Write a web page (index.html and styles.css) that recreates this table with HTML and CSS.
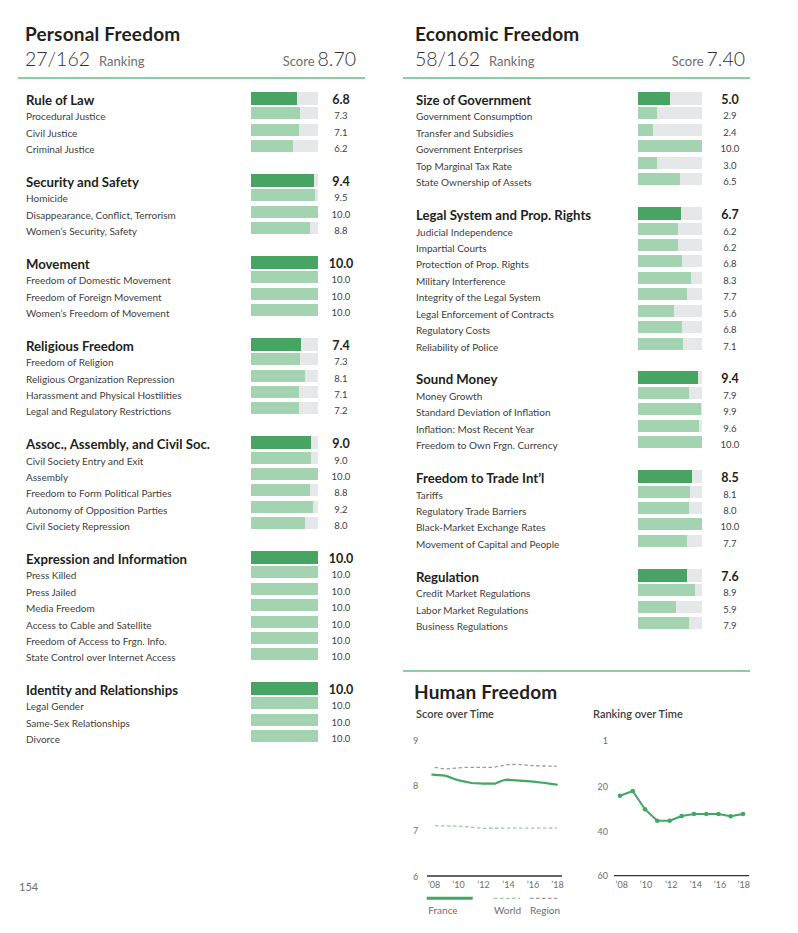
FILE: index.html
```html
<!DOCTYPE html>
<html lang="en">
<head>
<meta charset="utf-8">
<title>Freedom Index</title>
<link rel="stylesheet" href="styles.css">
</head>
<body>
<div class="page">
  <section class="col col-personal">
    <header class="col-head">
      <h1 class="col-title">Personal Freedom</h1>
      <div class="rank-line">
        <div class="rank"><span class="rank-num">27/162</span><span class="rank-lbl">Ranking</span></div>
        <div class="score"><span class="score-lbl">Score</span><span class="score-num">8.70</span></div>
      </div>
    </header>
    <div class="cats">
      <div class="cat">
        <div class="row row-main"><span class="lbl">Rule of Law</span><span class="bar"><span class="fill" style="width:68%"></span></span><span class="val">6.8</span></div>
        <div class="row"><span class="lbl">Procedural Justice</span><span class="bar"><span class="fill" style="width:73%"></span></span><span class="val">7.3</span></div>
        <div class="row"><span class="lbl">Civil Justice</span><span class="bar"><span class="fill" style="width:71%"></span></span><span class="val">7.1</span></div>
        <div class="row"><span class="lbl">Criminal Justice</span><span class="bar"><span class="fill" style="width:62%"></span></span><span class="val">6.2</span></div>
      </div>
      <div class="cat">
        <div class="row row-main"><span class="lbl">Security and Safety</span><span class="bar"><span class="fill" style="width:94%"></span></span><span class="val">9.4</span></div>
        <div class="row"><span class="lbl">Homicide</span><span class="bar"><span class="fill" style="width:95%"></span></span><span class="val">9.5</span></div>
        <div class="row"><span class="lbl">Disappearance, Conflict, Terrorism</span><span class="bar"><span class="fill" style="width:100%"></span></span><span class="val">10.0</span></div>
        <div class="row"><span class="lbl">Women’s Security, Safety</span><span class="bar"><span class="fill" style="width:88%"></span></span><span class="val">8.8</span></div>
      </div>
      <div class="cat">
        <div class="row row-main"><span class="lbl">Movement</span><span class="bar"><span class="fill" style="width:100%"></span></span><span class="val">10.0</span></div>
        <div class="row"><span class="lbl">Freedom of Domestic Movement</span><span class="bar"><span class="fill" style="width:100%"></span></span><span class="val">10.0</span></div>
        <div class="row"><span class="lbl">Freedom of Foreign Movement</span><span class="bar"><span class="fill" style="width:100%"></span></span><span class="val">10.0</span></div>
        <div class="row"><span class="lbl">Women’s Freedom of Movement</span><span class="bar"><span class="fill" style="width:100%"></span></span><span class="val">10.0</span></div>
      </div>
      <div class="cat">
        <div class="row row-main"><span class="lbl">Religious Freedom</span><span class="bar"><span class="fill" style="width:74%"></span></span><span class="val">7.4</span></div>
        <div class="row"><span class="lbl">Freedom of Religion</span><span class="bar"><span class="fill" style="width:73%"></span></span><span class="val">7.3</span></div>
        <div class="row"><span class="lbl">Religious Organization Repression</span><span class="bar"><span class="fill" style="width:81%"></span></span><span class="val">8.1</span></div>
        <div class="row"><span class="lbl">Harassment and Physical Hostilities</span><span class="bar"><span class="fill" style="width:71%"></span></span><span class="val">7.1</span></div>
        <div class="row"><span class="lbl">Legal and Regulatory Restrictions</span><span class="bar"><span class="fill" style="width:72%"></span></span><span class="val">7.2</span></div>
      </div>
      <div class="cat">
        <div class="row row-main"><span class="lbl">Assoc., Assembly, and Civil Soc.</span><span class="bar"><span class="fill" style="width:90%"></span></span><span class="val">9.0</span></div>
        <div class="row"><span class="lbl">Civil Society Entry and Exit</span><span class="bar"><span class="fill" style="width:90%"></span></span><span class="val">9.0</span></div>
        <div class="row"><span class="lbl">Assembly</span><span class="bar"><span class="fill" style="width:100%"></span></span><span class="val">10.0</span></div>
        <div class="row"><span class="lbl">Freedom to Form Political Parties</span><span class="bar"><span class="fill" style="width:88%"></span></span><span class="val">8.8</span></div>
        <div class="row"><span class="lbl">Autonomy of Opposition Parties</span><span class="bar"><span class="fill" style="width:92%"></span></span><span class="val">9.2</span></div>
        <div class="row"><span class="lbl">Civil Society Repression</span><span class="bar"><span class="fill" style="width:80%"></span></span><span class="val">8.0</span></div>
      </div>
      <div class="cat">
        <div class="row row-main"><span class="lbl">Expression and Information</span><span class="bar"><span class="fill" style="width:100%"></span></span><span class="val">10.0</span></div>
        <div class="row"><span class="lbl">Press Killed</span><span class="bar"><span class="fill" style="width:100%"></span></span><span class="val">10.0</span></div>
        <div class="row"><span class="lbl">Press Jailed</span><span class="bar"><span class="fill" style="width:100%"></span></span><span class="val">10.0</span></div>
        <div class="row"><span class="lbl">Media Freedom</span><span class="bar"><span class="fill" style="width:100%"></span></span><span class="val">10.0</span></div>
        <div class="row"><span class="lbl">Access to Cable and Satellite</span><span class="bar"><span class="fill" style="width:100%"></span></span><span class="val">10.0</span></div>
        <div class="row"><span class="lbl">Freedom of Access to Frgn. Info.</span><span class="bar"><span class="fill" style="width:100%"></span></span><span class="val">10.0</span></div>
        <div class="row"><span class="lbl">State Control over Internet Access</span><span class="bar"><span class="fill" style="width:100%"></span></span><span class="val">10.0</span></div>
      </div>
      <div class="cat">
        <div class="row row-main"><span class="lbl">Identity and Relationships</span><span class="bar"><span class="fill" style="width:100%"></span></span><span class="val">10.0</span></div>
        <div class="row"><span class="lbl">Legal Gender</span><span class="bar"><span class="fill" style="width:100%"></span></span><span class="val">10.0</span></div>
        <div class="row"><span class="lbl">Same-Sex Relationships</span><span class="bar"><span class="fill" style="width:100%"></span></span><span class="val">10.0</span></div>
        <div class="row"><span class="lbl">Divorce</span><span class="bar"><span class="fill" style="width:100%"></span></span><span class="val">10.0</span></div>
      </div>
    </div>
    <div class="page-num">154</div>
  </section>

  <section class="col col-economic">
    <header class="col-head">
      <h1 class="col-title">Economic Freedom</h1>
      <div class="rank-line">
        <div class="rank"><span class="rank-num">58/162</span><span class="rank-lbl">Ranking</span></div>
        <div class="score"><span class="score-lbl">Score</span><span class="score-num">7.40</span></div>
      </div>
    </header>
    <div class="cats">
      <div class="cat">
        <div class="row row-main"><span class="lbl">Size of Government</span><span class="bar"><span class="fill" style="width:50%"></span></span><span class="val">5.0</span></div>
        <div class="row"><span class="lbl">Government Consumption</span><span class="bar"><span class="fill" style="width:29%"></span></span><span class="val">2.9</span></div>
        <div class="row"><span class="lbl">Transfer and Subsidies</span><span class="bar"><span class="fill" style="width:24%"></span></span><span class="val">2.4</span></div>
        <div class="row"><span class="lbl">Government Enterprises</span><span class="bar"><span class="fill" style="width:100%"></span></span><span class="val">10.0</span></div>
        <div class="row"><span class="lbl">Top Marginal Tax Rate</span><span class="bar"><span class="fill" style="width:30%"></span></span><span class="val">3.0</span></div>
        <div class="row"><span class="lbl">State Ownership of Assets</span><span class="bar"><span class="fill" style="width:65%"></span></span><span class="val">6.5</span></div>
      </div>
      <div class="cat">
        <div class="row row-main"><span class="lbl">Legal System and Prop. Rights</span><span class="bar"><span class="fill" style="width:67%"></span></span><span class="val">6.7</span></div>
        <div class="row"><span class="lbl">Judicial Independence</span><span class="bar"><span class="fill" style="width:62%"></span></span><span class="val">6.2</span></div>
        <div class="row"><span class="lbl">Impartial Courts</span><span class="bar"><span class="fill" style="width:62%"></span></span><span class="val">6.2</span></div>
        <div class="row"><span class="lbl">Protection of Prop. Rights</span><span class="bar"><span class="fill" style="width:68%"></span></span><span class="val">6.8</span></div>
        <div class="row"><span class="lbl">Military Interference</span><span class="bar"><span class="fill" style="width:83%"></span></span><span class="val">8.3</span></div>
        <div class="row"><span class="lbl">Integrity of the Legal System</span><span class="bar"><span class="fill" style="width:77%"></span></span><span class="val">7.7</span></div>
        <div class="row"><span class="lbl">Legal Enforcement of Contracts</span><span class="bar"><span class="fill" style="width:56%"></span></span><span class="val">5.6</span></div>
        <div class="row"><span class="lbl">Regulatory Costs</span><span class="bar"><span class="fill" style="width:68%"></span></span><span class="val">6.8</span></div>
        <div class="row"><span class="lbl">Reliability of Police</span><span class="bar"><span class="fill" style="width:71%"></span></span><span class="val">7.1</span></div>
      </div>
      <div class="cat">
        <div class="row row-main"><span class="lbl">Sound Money</span><span class="bar"><span class="fill" style="width:94%"></span></span><span class="val">9.4</span></div>
        <div class="row"><span class="lbl">Money Growth</span><span class="bar"><span class="fill" style="width:79%"></span></span><span class="val">7.9</span></div>
        <div class="row"><span class="lbl">Standard Deviation of Inflation</span><span class="bar"><span class="fill" style="width:99%"></span></span><span class="val">9.9</span></div>
        <div class="row"><span class="lbl">Inflation: Most Recent Year</span><span class="bar"><span class="fill" style="width:96%"></span></span><span class="val">9.6</span></div>
        <div class="row"><span class="lbl">Freedom to Own Frgn. Currency</span><span class="bar"><span class="fill" style="width:100%"></span></span><span class="val">10.0</span></div>
      </div>
      <div class="cat">
        <div class="row row-main"><span class="lbl">Freedom to Trade Int’l</span><span class="bar"><span class="fill" style="width:85%"></span></span><span class="val">8.5</span></div>
        <div class="row"><span class="lbl">Tariffs</span><span class="bar"><span class="fill" style="width:81%"></span></span><span class="val">8.1</span></div>
        <div class="row"><span class="lbl">Regulatory Trade Barriers</span><span class="bar"><span class="fill" style="width:80%"></span></span><span class="val">8.0</span></div>
        <div class="row"><span class="lbl">Black-Market Exchange Rates</span><span class="bar"><span class="fill" style="width:100%"></span></span><span class="val">10.0</span></div>
        <div class="row"><span class="lbl">Movement of Capital and People</span><span class="bar"><span class="fill" style="width:77%"></span></span><span class="val">7.7</span></div>
      </div>
      <div class="cat">
        <div class="row row-main"><span class="lbl">Regulation</span><span class="bar"><span class="fill" style="width:76%"></span></span><span class="val">7.6</span></div>
        <div class="row"><span class="lbl">Credit Market Regulations</span><span class="bar"><span class="fill" style="width:89%"></span></span><span class="val">8.9</span></div>
        <div class="row"><span class="lbl">Labor Market Regulations</span><span class="bar"><span class="fill" style="width:59%"></span></span><span class="val">5.9</span></div>
        <div class="row"><span class="lbl">Business Regulations</span><span class="bar"><span class="fill" style="width:79%"></span></span><span class="val">7.9</span></div>
      </div>
    </div>

    <div class="human">
      <h2 class="human-title">Human Freedom</h2>
      <div class="charts">
        <div class="chart">
          <div class="chart-sub">Score over Time</div>
          <svg class="chart-svg" width="177" height="192" viewBox="0 0 177 192">
            <g class="ylab">
              <text x="-3" y="11">9</text>
              <text x="-3" y="56">8</text>
              <text x="-3" y="101">7</text>
              <text x="-3" y="147">6</text>
            </g>
            <path class="region" d="M18.7,38.3 L29,40 L40.7,39 L50.7,38.3 L77.3,38.3 L90.7,35.7 L100.7,35.3 L117.3,36.7 L140.7,37.3"/>
            <path class="world" d="M19,96.7 L47,97.3 L65.7,99.3 L140.7,99"/>
            <path class="france" d="M16.3,45.7 L29,46.7 C35,48 38,50.5 44,51.7 L55.7,54 L67.3,54.7 L79,54.7 C84,53 86,51 90.7,50.7 L104,51.7 L117.3,52.7 L129,54 L140.7,55.7"/>
            <path class="axis" d="M11,147 H146"/>
            <g class="xlab">
              <text x="18" y="155.5">’08</text>
              <text x="42.5" y="155.5">’10</text>
              <text x="67.5" y="155.5">’12</text>
              <text x="92.5" y="155.5">’14</text>
              <text x="117" y="155.5">’16</text>
              <text x="141.5" y="155.5">’18</text>
            </g>
            <path class="france leg-france" d="M10.7,169.3 H56.7"/>
            <path class="world" d="M78,169.3 H104"/>
            <path class="region" d="M114,169.3 H141.3"/>
            <g class="legend">
              <text x="12.3" y="181">France</text>
              <text x="78" y="181">World</text>
              <text x="114" y="181">Region</text>
            </g>
          </svg>
        </div>
        <div class="chart">
          <div class="chart-sub">Ranking over Time</div>
          <svg class="chart-svg" width="157" height="192" viewBox="0 0 157 192">
            <g class="ylab ylab-end">
              <text x="15" y="11.7">1</text>
              <text x="15" y="57.3">20</text>
              <text x="15" y="102.3">40</text>
              <text x="15" y="146.7">60</text>
            </g>
            <path class="axis" d="M21,146.7 H156"/>
            <path class="rankline" d="M27,66.7 L39.7,62 L52,80.3 L64.3,91.7 L76.7,91.7 L88.7,87 L101,85 L113.3,85 L125.5,85 L137.7,87.3 L150,85"/>
            <g class="dots">
              <circle cx="27" cy="66.7" r="2.3"/>
              <circle cx="39.7" cy="62" r="2.3"/>
              <circle cx="52" cy="80.3" r="2.3"/>
              <circle cx="64.3" cy="91.7" r="2.3"/>
              <circle cx="76.7" cy="91.7" r="2.3"/>
              <circle cx="88.7" cy="87" r="2.3"/>
              <circle cx="101" cy="85" r="2.3"/>
              <circle cx="113.3" cy="85" r="2.3"/>
              <circle cx="125.5" cy="85" r="2.3"/>
              <circle cx="137.7" cy="87.3" r="2.3"/>
              <circle cx="150" cy="85" r="2.3"/>
            </g>
            <g class="xlab">
              <text x="28.7" y="155.5">’08</text>
              <text x="53" y="155.5">’10</text>
              <text x="78.3" y="155.5">’12</text>
              <text x="102.8" y="155.5">’14</text>
              <text x="127" y="155.5">’16</text>
              <text x="150.8" y="155.5">’18</text>
            </g>
          </svg>
        </div>
      </div>
    </div>
  </section>
</div>
</body>
</html>
```

FILE: styles.css
```css
html, body {
  margin: 0;
  padding: 0;
  background: #ffffff;
}

body {
  font-family: Lato, "Open Sans", "Liberation Sans", sans-serif;
  color: #231f20;
}

.page {
  display: grid;
  grid-template-columns: 347px 347px;
  column-gap: 38px;
  padding: 23px 0 0 18px;
  height: 933px;
  box-sizing: border-box;
}

.col {
  display: flex;
  flex-direction: column;
  min-width: 0;
}

.col-personal {
  --pad-l: 8px;
  --pad-r: 9px;
  --bar-w: 67px;
  --gap: 8px;
  --pitch: 16.4px;
  --head-pl: 7px;
  --head-pr: 9px;
}

.col-economic {
  --pad-l: 13px;
  --pad-r: 5px;
  --bar-w: 64px;
  --gap: 13px;
  --pitch: 16.45px;
  --head-pl: 12px;
  --head-pr: 5px;
}

/* Column header */
.col-head {
  padding: 0 var(--head-pr) 4px var(--head-pl);
  border-bottom: 2px solid #86d1a4;
}

.col-title {
  margin: 0;
  font-size: 19px;
  line-height: 22px;
  font-weight: 700;
  letter-spacing: 0.2px;
  color: #231f20;
}

.rank-line {
  display: flex;
  justify-content: space-between;
  align-items: baseline;
  margin-top: 2px;
  line-height: 24px;
}

.rank-num,
.score-num {
  font-size: 19.5px;
  font-weight: 300;
  color: #333132;
}

.rank-lbl {
  font-size: 13px;
  color: #6d6e71;
  margin-left: 9px;
}

.score-lbl {
  font-size: 13px;
  color: #6d6e71;
  margin-right: 3px;
}

/* Category rows */
.cats {
  padding: 13px var(--pad-r) 0 var(--pad-l);
  display: flex;
  flex-direction: column;
  gap: var(--pitch);
}

.row {
  display: grid;
  grid-template-columns: 1fr var(--bar-w) 30px;
  column-gap: var(--gap);
  height: var(--pitch);
  align-items: center;
}

.lbl {
  font-size: 10px;
  line-height: var(--pitch);
  color: #414042;
  white-space: nowrap;
}

.row-main .lbl {
  font-size: 13.2px;
  font-weight: 700;
  color: #231f20;
}

.bar {
  display: block;
  align-self: start;
  height: 12px;
  margin-top: -1px;
  background: #e6e7e8;
}

.row-main .bar {
  height: 13px;
  margin-top: 0;
}

.fill {
  display: block;
  height: 100%;
  background: #a3d3b1;
}

.row-main .fill {
  background: #48a463;
}

.val {
  text-align: center;
  font-size: 9.5px;
  color: #414042;
  line-height: var(--pitch);
}

.row-main .val {
  font-size: 12.5px;
  font-weight: 700;
  color: #231f20;
}

.page-num {
  margin-top: auto;
  margin-bottom: 39px;
  padding-left: 1px;
  font-size: 11px;
  line-height: 14px;
  color: #6d6e71;
}

/* Human freedom */
.human {
  margin-top: 36px;
  border-top: 2px solid #86d1a4;
}

.human-title {
  margin: 9px 0 0 11px;
  font-size: 19px;
  line-height: 22px;
  font-weight: 700;
  letter-spacing: 0.2px;
  color: #231f20;
}

.charts {
  display: grid;
  grid-template-columns: 177px 1fr;
  padding-left: 13px;
  margin-top: 4px;
}

.chart-sub {
  font-size: 11px;
  font-weight: 600;
  line-height: 14px;
  color: #414042;
}

.chart-svg {
  display: block;
  margin-top: 8px;
  overflow: visible;
}

.chart-svg text {
  font-family: Lato, "Open Sans", sans-serif;
  dominant-baseline: central;
}

.ylab text {
  font-size: 9px;
  fill: #6d6e71;
}

.ylab-end text {
  text-anchor: end;
}

.xlab text {
  font-size: 9px;
  fill: #6d6e71;
  text-anchor: middle;
}

.legend text {
  font-size: 10px;
  fill: #6d6e71;
}

.axis {
  stroke: #333132;
  stroke-width: 1.3;
  fill: none;
}

.france {
  stroke: #41a863;
  stroke-width: 2.2;
  fill: none;
  stroke-linejoin: round;
  stroke-linecap: round;
}

.leg-france {
  stroke-width: 3;
  stroke-linecap: butt;
}

.world {
  stroke: #8fd0a4;
  stroke-width: 1.3;
  stroke-dasharray: 3.5 2.5;
  fill: none;
}

.region {
  stroke: #9b9b9b;
  stroke-width: 1.3;
  stroke-dasharray: 3.5 2.5;
  fill: none;
}

.rankline {
  stroke: #41a863;
  stroke-width: 2;
  fill: none;
  stroke-linejoin: round;
}

.dots circle {
  fill: #41a863;
}
```
